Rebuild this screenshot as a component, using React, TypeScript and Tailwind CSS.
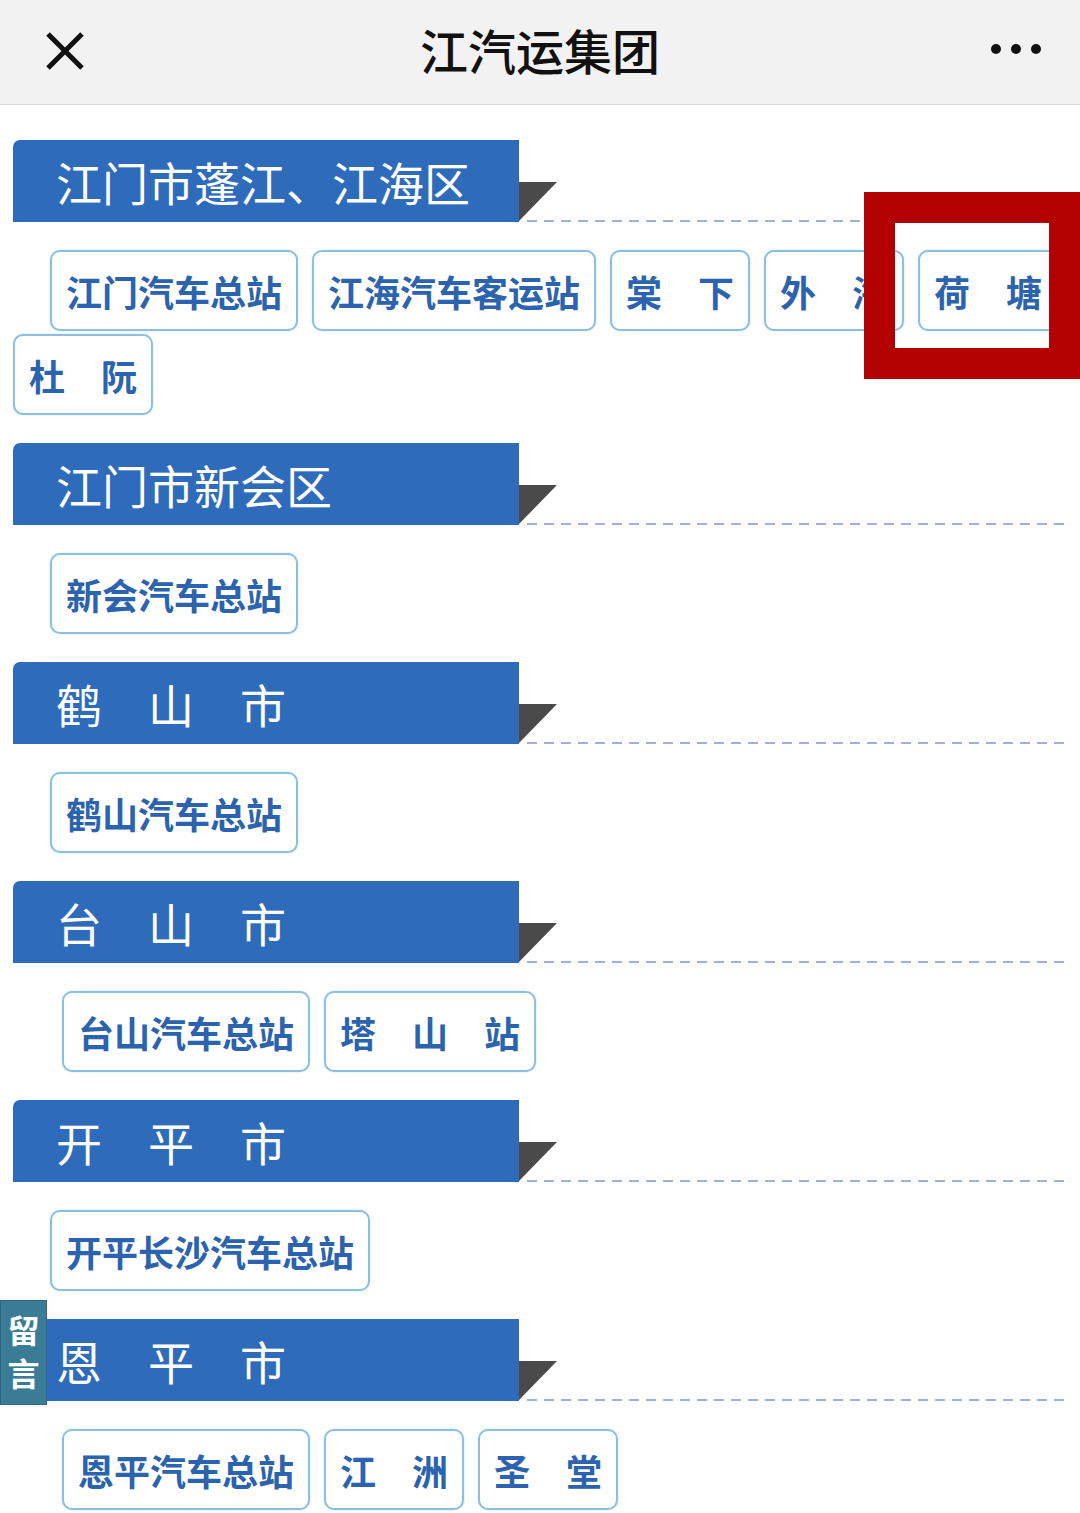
const FONT = { fontFamily: '"Noto Sans CJK SC", "Noto Sans", sans-serif' };

interface SectionProps {
  title: string;
  stations: string[];
  indent: "sm" | "lg";
}

function Section({ title, stations, indent }: SectionProps) {
  return (
    <div className="mt-[28px] first:mt-[35px]">
      <div className="flex items-start pl-[13px] h-[82px]">
        <div className="w-[506px] h-[82px] bg-[#2e6cbb] rounded-tl-[7px] flex items-center pl-[43px]">
          <span className="text-white text-[46px] leading-none font-normal whitespace-pre">
            {title}
          </span>
        </div>
        <div className="flex-1 flex flex-col pt-[42px]">
          <div className="w-0 h-0 border-t-[39px] border-t-[#4a4a4a] border-r-[38px] border-r-transparent" />
          <div className="h-[2px] -mt-[1px] ml-[8px] mr-[12px] bg-[repeating-linear-gradient(90deg,#9db1da_0_10px,transparent_10px_17px)]" />
        </div>
      </div>
      <div className="mt-[28px] px-[13px] flex flex-wrap gap-x-[14px] gap-y-[3px]">
        {stations.map((s, i) => (
          <div
            key={s}
            className={
              "h-[81px] px-[14px] flex items-center bg-white border-2 border-[#8bc0e2] rounded-[10px] shadow-[0_0_2px_rgba(100,160,210,0.35)] " +
              (i === 0 ? (indent === "lg" ? "ml-[49px]" : "ml-[37px]") : "")
            }
          >
            <span className="text-[36px] leading-none font-bold text-[#2b63ae] whitespace-pre">
              {s}
            </span>
          </div>
        ))}
      </div>
    </div>
  );
}

const sections: SectionProps[] = [
  {
    title: "江门市蓬江、江海区",
    stations: ["江门汽车总站", "江海汽车客运站", "棠　下", "外　海", "荷　塘", "杜　阮"],
    indent: "sm",
  },
  { title: "江门市新会区", stations: ["新会汽车总站"], indent: "sm" },
  { title: "鹤　山　市", stations: ["鹤山汽车总站"], indent: "sm" },
  { title: "台　山　市", stations: ["台山汽车总站", "塔　山　站"], indent: "lg" },
  { title: "开　平　市", stations: ["开平长沙汽车总站"], indent: "sm" },
  { title: "恩　平　市", stations: ["恩平汽车总站", "江　洲", "圣　堂"], indent: "lg" },
];

export default function App() {
  return (
    <div className="relative w-[1080px] h-[1513px] bg-white overflow-hidden" style={FONT}>
      {/* top bar */}
      <div className="h-[105px] bg-[#f2f2f2] border-b border-[#dcdcdc] flex items-center justify-between px-[45px]">
        <svg width="40" height="40" viewBox="0 0 40 40" className="mt-[-2px]">
          <path d="M3 3 L37 37 M37 3 L3 37" stroke="#111" strokeWidth="5" strokeLinecap="butt" />
        </svg>
        <span className="text-[48px] leading-none font-medium text-[#111] ml-[4px] mt-[-6px]">江汽运集团</span>
        <div className="flex gap-[10px] mr-[-6px] mt-[-6px]">
          <span className="w-[10px] h-[10px] rounded-full bg-[#111]" />
          <span className="w-[10px] h-[10px] rounded-full bg-[#111]" />
          <span className="w-[10px] h-[10px] rounded-full bg-[#111]" />
        </div>
      </div>

      <div>
        {sections.map((s) => (
          <Section key={s.title} {...s} />
        ))}
      </div>

      {/* highlight box */}
      <div className="absolute left-[864px] top-[192px] w-[216px] h-[187px] border-[31px] border-[#b30000]" />

      {/* message tab */}
      <div className="absolute left-0 top-[1300px] w-[47px] h-[105px] bg-[#3a7b96] shadow-[inset_0_0_0_1px_#2d6880] flex items-center justify-center">
        <span className="text-white text-[32px] leading-none font-bold tracking-[11px] [writing-mode:vertical-rl] mt-[11px]">
          留言
        </span>
      </div>
    </div>
  );
}
